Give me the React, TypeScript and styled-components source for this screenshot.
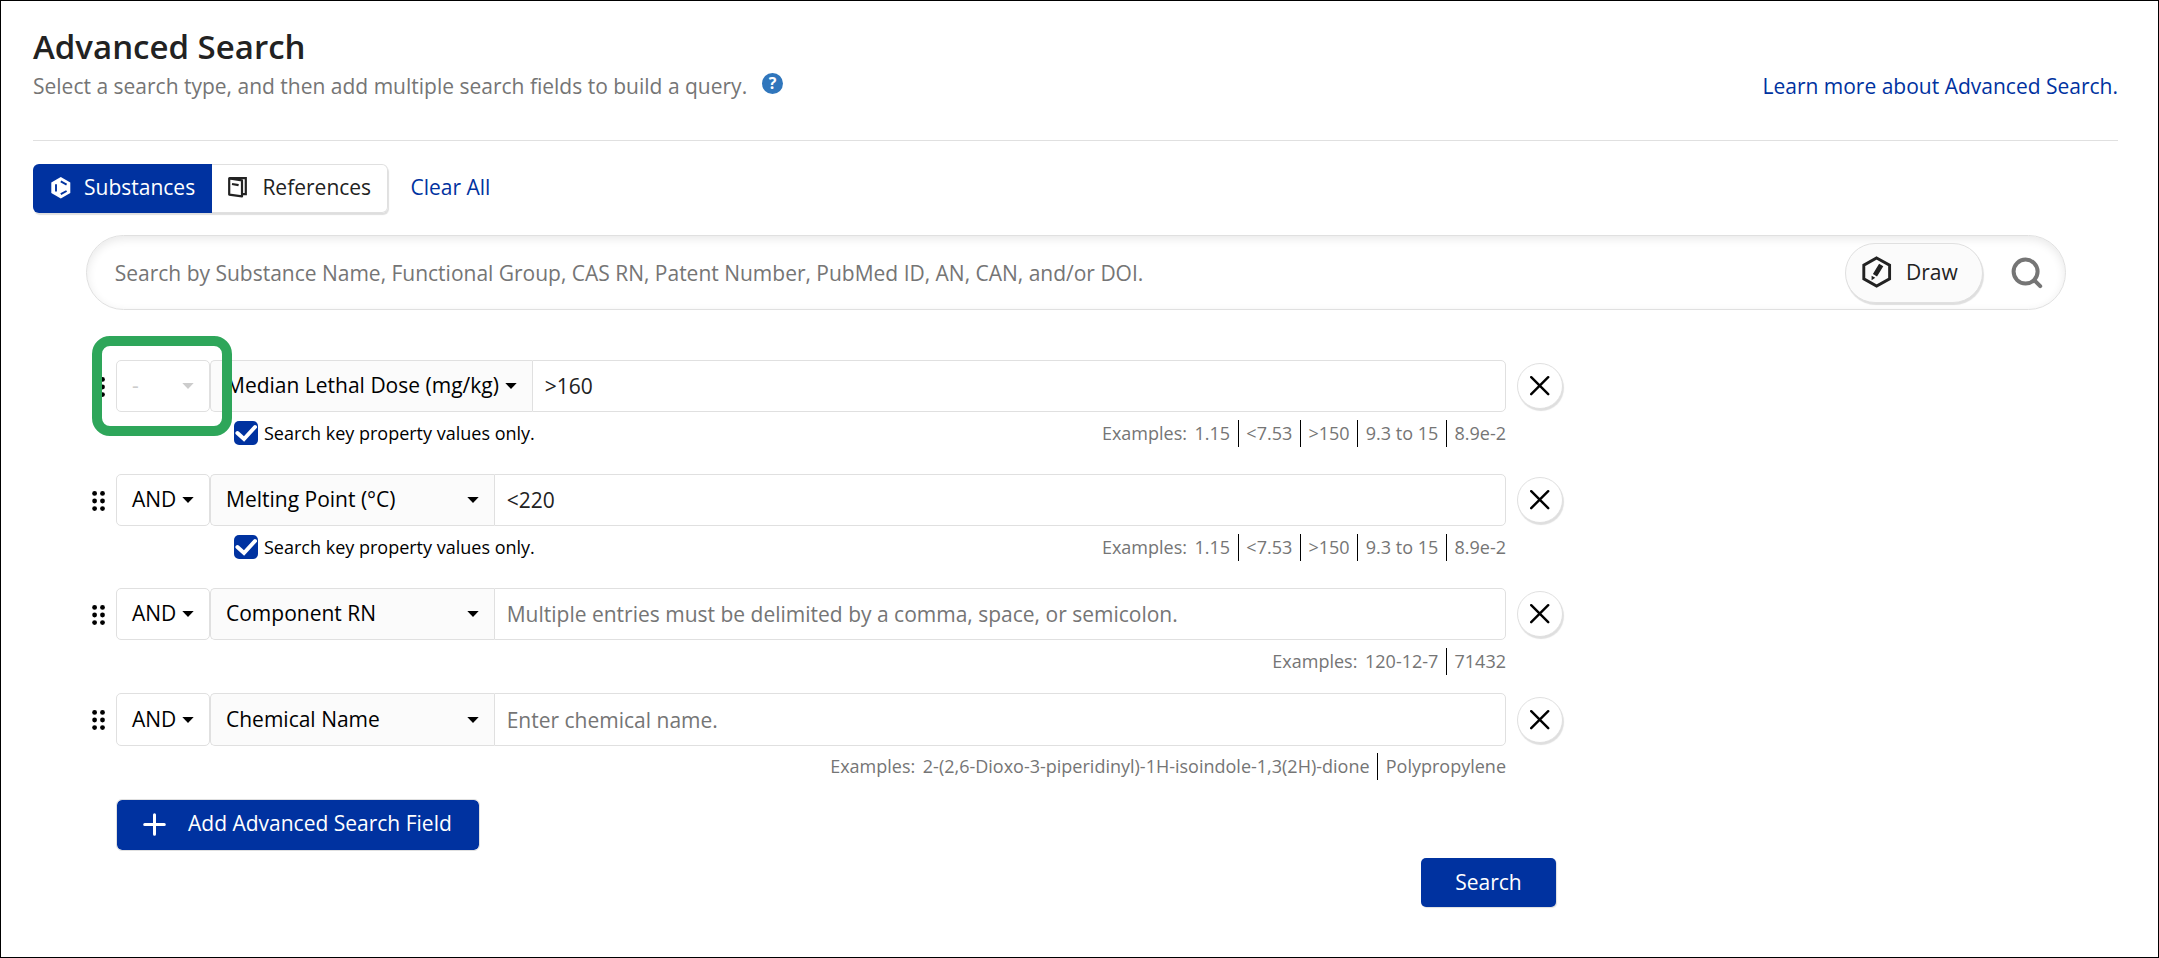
import React from 'react';
import styled, { createGlobalStyle, css } from 'styled-components';

const blue = '#0032a0';
const line = '#e0e0e0';
const grey = '#757575';

const GlobalStyle = createGlobalStyle`
  * { box-sizing: border-box; }
  body { margin: 0; background: #fff; }
`;

const Page = styled.div`
  height: 958px;
  border: 1px solid #000;
  padding: 23px 40px 0 32px;
  background: #fff;
  color: #222;
  font: 21px/28px 'Open Sans', 'Noto Sans', sans-serif;
  white-space: nowrap;
`;

const Header = styled.header`
  display: flex;
  justify-content: space-between;
  align-items: flex-end;
  height: 117px;
  padding-bottom: 40px;
  border-bottom: 1px solid ${line};
`;

const Title = styled.h1`
  margin: 0 0 3px;
  font-size: 33px;
  font-weight: 600;
  line-height: 44px;
`;

const Subtitle = styled.p`
  display: flex;
  align-items: center;
  gap: 15px;
  margin: 0;
  color: ${grey};
`;

const HelpBadge = styled.span`
  width: 21px;
  height: 21px;
  margin-top: -5px;
  border-radius: 50%;
  background: #3076bc;
  color: #fff;
  font-size: 16px;
  font-weight: 700;
  line-height: 21px;
  text-align: center;
`;

const TextLink = styled.a`
  color: ${blue};
  text-decoration: none;
`;

const TypeBar = styled.nav`
  display: flex;
  align-items: center;
  gap: 22.5px;
  height: 49px;
  margin-top: 23px;
  > a { margin-top: -3px; }
`;

const TabGroup = styled.div`
  display: flex;
  height: 49px;
  border-radius: 6px;
  box-shadow: 1px 2px 1px rgba(0, 0, 0, 0.13);
`;

const Tab = styled.button<{ $active?: boolean }>`
  display: flex;
  align-items: center;
  gap: 13px;
  padding: 0 17px 3px 18px;
  border: 0;
  font: inherit;
  ${(p) =>
    p.$active
      ? css`
          width: 179px;
          border-radius: 6px 0 0 6px;
          background: ${blue};
          color: #fff;
        `
      : css`
          width: 176px;
          gap: 14.4px;
          padding-left: 16px;
          border: 1px solid ${line};
          border-left: 0;
          border-radius: 0 6px 6px 0;
          background: #fff;
          color: #222;
        `}
  svg { flex: none; margin-top: 1px; }
`;

const SearchBar = styled.div`
  display: flex;
  align-items: center;
  height: 75px;
  margin: 22px 52px 0 53px;
  padding: 0 22px 0 27.8px;
  border: 1px solid ${line};
  border-radius: 38px;
  box-shadow: inset 0 3px 10px rgba(0, 0, 0, 0.09);
  color: ${grey};
  > svg { margin-top: 1px; }
`;

const SearchHint = styled.span`
  flex: 1;
  margin-top: 1px;
  letter-spacing: -0.01px;
`;

const DrawButton = styled.button`
  display: flex;
  align-items: center;
  gap: 14px;
  width: 138px;
  height: 60px;
  margin: 1px 28px 0 0;
  padding: 0 0 0 16px;
  border: 1px solid ${line};
  border-radius: 30px;
  background: #fbfbfb;
  box-shadow: 1px 2px 1px rgba(0, 0, 0, 0.13);
  color: #222;
  font: inherit;
  span { margin-top: -2px; }
  svg { margin-top: -3px; }
`;

const Form = styled.form`
  width: 1473px;
  margin: 50px 0 0 58px;
`;

const FieldBlock = styled.section<{ $pitch: number }>`
  display: grid;
  grid-template-columns: 25px 1390px 57px;
  grid-template-rows: 52.4px auto;
  height: ${(p) => p.$pitch}px;
`;

const DragHandle = styled.span`
  display: flex;
  align-items: center;
  padding: 1px 0 0 1px;
`;

const Controls = styled.div`
  display: flex;
`;

const OperatorSelect = styled.div<{ $disabled?: boolean }>`
  display: flex;
  align-items: center;
  justify-content: space-between;
  width: 94px;
  padding: 0 15px;
  border: 1px solid ${line};
  border-radius: 5px;
  background: #fff;
  color: ${(p) => (p.$disabled ? '#ccc' : '#000')};
  span { margin-top: -2px; }
`;

const FieldSelect = styled.div<{ $wide?: boolean }>`
  display: flex;
  align-items: center;
  justify-content: space-between;
  width: ${(p) => (p.$wide ? 322 : 284)}px;
  padding: 0 15px;
  border: 1px solid ${line};
  border-right: 0;
  border-radius: 5px 0 0 5px;
  background: #fbfbfb;
  color: #000;
  span { margin-top: -2px; }
`;

const ValueBox = styled.div<{ $placeholder?: boolean }>`
  display: flex;
  flex: 1;
  align-items: center;
  padding: 0 11.7px;
  border: 1px solid ${line};
  border-radius: 0 5px 5px 0;
  background: #fff;
  color: ${(p) => (p.$placeholder ? grey : '#222')};
`;

const RemoveButton = styled.button`
  display: flex;
  align-items: center;
  justify-content: center;
  align-self: center;
  width: 46px;
  height: 46px;
  margin-left: 11px;
  padding: 0;
  border: 1px solid ${line};
  border-radius: 50%;
  background: #fff;
  box-shadow: 1px 2px 1px rgba(0, 0, 0, 0.13);
`;

const Notes = styled.div`
  grid-column: 2;
  display: flex;
  justify-content: space-between;
  align-items: flex-start;
  padding: 7.6px 0 0 118px;
  font-size: 18px;
  line-height: 27px;
`;

const CheckLabel = styled.label`
  display: flex;
  align-items: center;
  gap: 6px;
  color: #000;
  svg { margin-top: -1px; }
`;

const Examples = styled.div`
  display: flex;
  gap: 7.6px;
  margin-left: auto;
  color: ${grey};
`;

const Separator = styled.i`
  width: 1px;
  background: #000;
`;

const AddButton = styled.button`
  display: flex;
  align-items: center;
  gap: 22px;
  width: 364px;
  height: 52px;
  margin-left: 25px;
  padding: 0 0 1px 26px;
  border: 1px solid ${line};
  border-radius: 6px;
  background: ${blue};
  background-clip: padding-box;
  color: #fff;
  font: inherit;
  span { margin-top: -3px; }
`;

const SubmitButton = styled.button`
  display: block;
  width: 135px;
  height: 49px;
  margin: 7px 8px 0 auto;
  padding: 0 0 1px;
  border: 0;
  border-radius: 5px;
  background: ${blue};
  box-shadow: 1px 1px 1px rgba(0, 0, 0, 0.13);
  color: #fff;
  font: inherit;
`;

const Callout = styled.div`
  position: absolute;
  top: 336px;
  left: 92px;
  width: 140px;
  height: 100px;
  border: 10px solid #2ea65a;
  border-radius: 18px;
`;

const Caret = () => (
  <svg width="12" height="6" viewBox="0 0 12 6" fill="currentColor">
    <path d="M0.3 0h11.4L6 6z" />
  </svg>
);

const SubstanceIcon = () => (
  <svg width="20" height="22" viewBox="0 0 20 22">
    <path d="M9.8 0 19.3 5.4v10.7l-9.5 5.4-9.5-5.4V5.4z" fill="#fff" />
    <path d="M5 7.2v7.2M9.8 4.4l5.8 3.2M9.8 17.2l5.8-3.2" fill="none" stroke={blue} strokeWidth="1.9" />
  </svg>
);

const ReferenceIcon = () => (
  <svg width="20" height="21" viewBox="0 0 20 21" fill="none" stroke="#222">
    <path d="M1.2 1.2h16.6v15.9h-3" strokeWidth="2.2" />
    <path d="M1.2 1.4 14 3.4v16l-12.8-1.8z" strokeWidth="2.2" strokeLinejoin="round" />
    <path d="m4 7 6.6 1.2" strokeWidth="2.2" />
  </svg>
);

const DrawIcon = () => (
  <svg width="30" height="32" viewBox="0 0 30 32">
    <path d="M14.6 2 27.6 9.2v13.6L14.6 30 1.8 22.8V9.2z" fill="none" stroke="#222" strokeWidth="2.9" />
    <path d="M17.1 7.8 21.3 10.2 15 20.4 10.9 18zM9.6 19.8l3.7 2-3.7 2.4z" fill="#222" />
  </svg>
);

const SearchIcon = () => (
  <svg width="32" height="32" viewBox="0 0 32 32" fill="none" stroke={grey} strokeWidth="4">
    <circle cx="14.6" cy="14.6" r="12" />
    <path d="m23.2 23.2 6 6" strokeLinecap="round" />
  </svg>
);

const DotsIcon = () => (
  <svg width="13" height="20" viewBox="0 0 13 20" fill="#000">
    {[2.4, 10, 17.6].map((y) => (
      <React.Fragment key={y}>
        <circle cx="2.6" cy={y} r="2.4" />
        <circle cx="10.5" cy={y} r="2.4" />
      </React.Fragment>
    ))}
  </svg>
);

const CrossIcon = () => (
  <svg width="20" height="20" viewBox="0 0 20 20" stroke="#000" strokeWidth="2.4" strokeLinecap="round">
    <path d="m1.2 1.2 17 17M18.2 1.2l-17 17" />
  </svg>
);

const CheckIcon = () => (
  <svg width="24" height="24" viewBox="0 0 24 24">
    <rect width="24" height="24" rx="5" fill={blue} />
    <path d="m3.4 12 6.6 6L21 6" fill="none" stroke="#fff" strokeWidth="4" strokeLinecap="round" />
  </svg>
);

const PlusIcon = () => (
  <svg width="23" height="23" viewBox="0 0 23 23" stroke="#fff" strokeWidth="3" strokeLinecap="round">
    <path d="M11.5 1.7v19.6M1.7 11.5h19.6" />
  </svg>
);

type Field = {
  operator: string;
  name: string;
  value?: string;
  placeholder?: string;
  keyValues?: boolean;
  examples: string[];
  pitch: number;
};

const propertyExamples = ['1.15', '<7.53', '>150', '9.3 to 15', '8.9e-2'];

const fields: Field[] = [
  {
    operator: '-',
    name: 'Median Lethal Dose (mg/kg)',
    value: '>160',
    keyValues: true,
    examples: propertyExamples,
    pitch: 114.03,
  },
  {
    operator: 'AND',
    name: 'Melting Point (°C)',
    value: '<220',
    keyValues: true,
    examples: propertyExamples,
    pitch: 114.03,
  },
  {
    operator: 'AND',
    name: 'Component RN',
    placeholder: 'Multiple entries must be delimited by a comma, space, or semicolon.',
    examples: ['120-12-7', '71432'],
    pitch: 105.36,
  },
  {
    operator: 'AND',
    name: 'Chemical Name',
    placeholder: 'Enter chemical name.',
    examples: ['2-(2,6-Dioxo-3-piperidinyl)-1H-isoindole-1,3(2H)-dione', 'Polypropylene'],
    pitch: 105.6,
  },
];

const FieldRow = ({ field }: { field: Field }) => (
  <FieldBlock $pitch={field.pitch}>
    <DragHandle>
      <DotsIcon />
    </DragHandle>
    <Controls>
      <OperatorSelect $disabled={field.operator === '-'}>
        <span>{field.operator}</span>
        <Caret />
      </OperatorSelect>
      <FieldSelect $wide={field.name.length > 20}>
        <span>{field.name}</span>
        <Caret />
      </FieldSelect>
      <ValueBox $placeholder={!field.value}>{field.value ?? field.placeholder}</ValueBox>
    </Controls>
    <RemoveButton type="button" aria-label="Remove field">
      <CrossIcon />
    </RemoveButton>
    <Notes>
      {field.keyValues && (
        <CheckLabel>
          <CheckIcon />
          <span>Search key property values only.</span>
        </CheckLabel>
      )}
      <Examples>
        <span>Examples:</span>
        {field.examples.map((example, index) => (
          <React.Fragment key={example}>
            {index > 0 && <Separator />}
            <span>{example}</span>
          </React.Fragment>
        ))}
      </Examples>
    </Notes>
  </FieldBlock>
);

export default function App() {
  return (
    <>
      <GlobalStyle />
      <Page>
        <Header>
          <div>
            <Title>Advanced Search</Title>
            <Subtitle>
              Select a search type, and then add multiple search fields to build a query.
              <HelpBadge>?</HelpBadge>
            </Subtitle>
          </div>
          <TextLink href="#">Learn more about Advanced Search.</TextLink>
        </Header>
        <TypeBar>
          <TabGroup>
            <Tab $active>
              <SubstanceIcon />
              <span>Substances</span>
            </Tab>
            <Tab>
              <ReferenceIcon />
              <span>References</span>
            </Tab>
          </TabGroup>
          <TextLink href="#">Clear All</TextLink>
        </TypeBar>
        <SearchBar>
          <SearchHint>
            Search by Substance Name, Functional Group, CAS RN, Patent Number, PubMed ID, AN, CAN, and/or DOI.
          </SearchHint>
          <DrawButton>
            <DrawIcon />
            <span>Draw</span>
          </DrawButton>
          <SearchIcon />
        </SearchBar>
        <Form>
          {fields.map((field) => (
            <FieldRow key={field.name} field={field} />
          ))}
          <AddButton type="button">
            <PlusIcon />
            <span>Add Advanced Search Field</span>
          </AddButton>
          <SubmitButton type="button">Search</SubmitButton>
        </Form>
      </Page>
      <Callout />
    </>
  );
}
